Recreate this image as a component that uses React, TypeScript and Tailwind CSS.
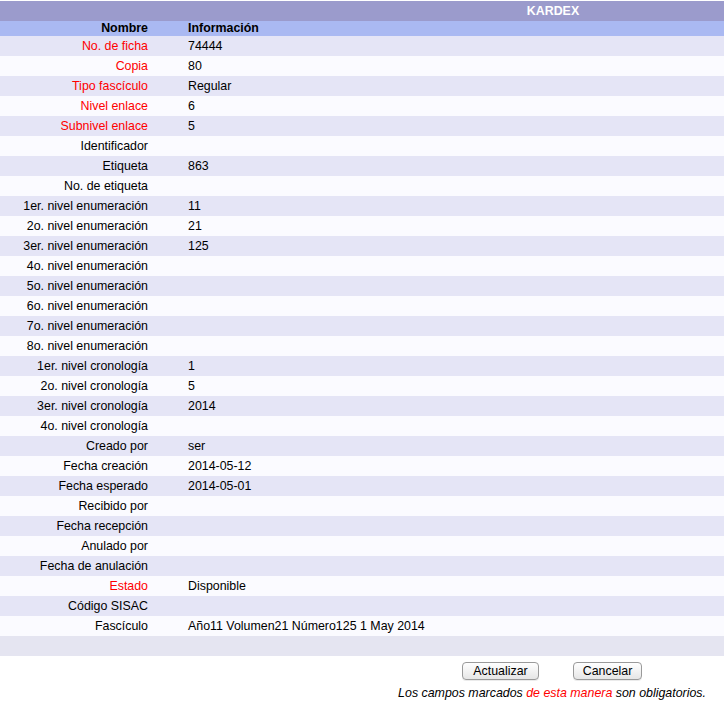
import React from 'react'

type Row = { label: string; value?: string; required?: boolean }

const rows: Row[] = [
  { label: 'No. de ficha', value: '74444', required: true },
  { label: 'Copia', value: '80', required: true },
  { label: 'Tipo fascículo', value: 'Regular', required: true },
  { label: 'Nivel enlace', value: '6', required: true },
  { label: 'Subnivel enlace', value: '5', required: true },
  { label: 'Identificador' },
  { label: 'Etiqueta', value: '863' },
  { label: 'No. de etiqueta' },
  { label: '1er. nivel enumeración', value: '11' },
  { label: '2o. nivel enumeración', value: '21' },
  { label: '3er. nivel enumeración', value: '125' },
  { label: '4o. nivel enumeración' },
  { label: '5o. nivel enumeración' },
  { label: '6o. nivel enumeración' },
  { label: '7o. nivel enumeración' },
  { label: '8o. nivel enumeración' },
  { label: '1er. nivel cronología', value: '1' },
  { label: '2o. nivel cronología', value: '5' },
  { label: '3er. nivel cronología', value: '2014' },
  { label: '4o. nivel cronología' },
  { label: 'Creado por', value: 'ser' },
  { label: 'Fecha creación', value: '2014-05-12' },
  { label: 'Fecha esperado', value: '2014-05-01' },
  { label: 'Recibido por' },
  { label: 'Fecha recepción' },
  { label: 'Anulado por' },
  { label: 'Fecha de anulación' },
  { label: 'Estado', value: 'Disponible', required: true },
  { label: 'Código SISAC' },
  { label: 'Fascículo', value: 'Año11 Volumen21 Número125 1 May 2014' },
]

export default function App() {
  return (
    <div className="w-[724px] min-h-[707px] bg-white text-[12.4px] text-black font-['Liberation_Sans',Arial,sans-serif]">
      <div className="pt-px">
        <div className="flex h-[20px] items-center bg-[#9b9bcc]">
          <div className="w-[382px]" />
          <div className="flex-1 text-center font-bold text-white">KARDEX</div>
        </div>
        <div className="flex h-[15px] items-center bg-[#aab9f2] font-bold">
          <div className="w-[148px] text-right">Nombre</div>
          <div className="pl-[40px]">Información</div>
        </div>
        {rows.map((r, i) => (
          <div
            key={r.label}
            className={`flex h-[20px] items-center ${i % 2 === 0 ? 'bg-[#e5e5f6]' : 'bg-[#fbfbff]'}`}
          >
            <div className={`w-[148px] text-right ${r.required ? 'text-[#ff0000]' : ''}`}>{r.label}</div>
            <div className="pl-[40px]">{r.value}</div>
          </div>
        ))}
        <div className="h-[20px] bg-[#e5e5f1]" />
      </div>

      <div className="flex pl-[462px] pt-[6px] gap-[34px]">
        <button className="h-[18px] w-[77px] rounded-[4px] border border-[#9a9a9a] bg-gradient-to-b from-white to-[#e6e6e6] text-[12.4px] leading-none shadow-[0_1px_0_rgba(0,0,0,0.08)]">
          Actualizar
        </button>
        <button className="h-[18px] w-[69px] rounded-[4px] border border-[#9a9a9a] bg-gradient-to-b from-white to-[#e6e6e6] text-[12.4px] leading-none shadow-[0_1px_0_rgba(0,0,0,0.08)]">
          Cancelar
        </button>
      </div>

      <div className="pt-[4px] pr-[18px] text-right italic">
        Los campos marcados <span className="text-[#ff0000]">de esta manera</span> son obligatorios.
      </div>
    </div>
  )
}
